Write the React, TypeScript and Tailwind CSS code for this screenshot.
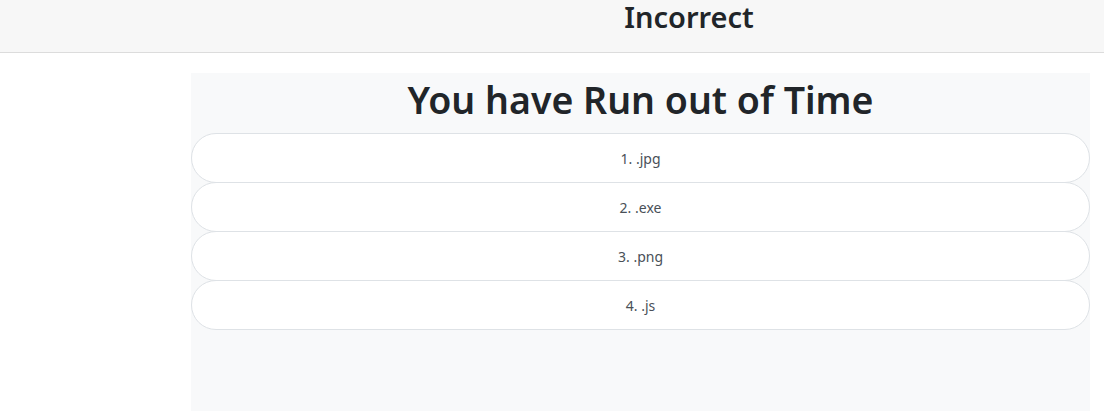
const options = ['.jpg', '.exe', '.png', '.js']

export default function App() {
  return (
    <div className="min-h-screen bg-white font-['Noto_Sans',sans-serif] text-[#212529]">
      <header className="flex h-[53px] items-start justify-center border-b border-[#dcdcdc] bg-[#f7f7f7] pl-[274px]">
        <h2 className="text-[29px] font-semibold leading-[33px]">Incorrect</h2>
      </header>

      <div className="pl-[191px] pr-[14px] pt-[20px]">
        <div className="h-[338px] bg-[#f8f9fa]">
          <h1 className="h-[60px] text-center text-[37.5px] font-semibold leading-[54px]">
            You have Run out of Time
          </h1>
          <div className="flex flex-col">
            {options.map((o, i) => (
              <button
                key={o}
                className="-mt-px h-[50px] w-full rounded-full border border-[#dee2e6] bg-white text-center text-[14px] text-[#495057] first:mt-0"
              >
                {i + 1}. {o}
              </button>
            ))}
          </div>
        </div>
      </div>
    </div>
  )
}
